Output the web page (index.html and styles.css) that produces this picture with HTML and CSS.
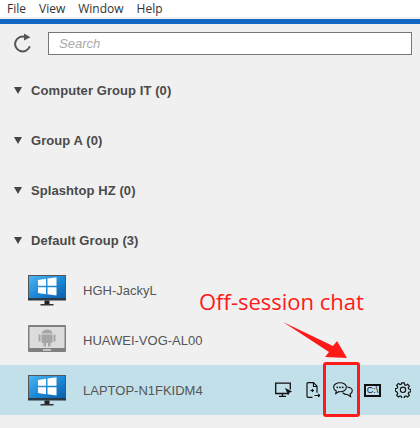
FILE: index.html
```html
<!DOCTYPE html>
<html lang="en">
<head>
    <meta charset="UTF-8">
    <meta name="viewport" content="width=device-width, initial-scale=1.0">
    <title>Computers</title>
    <link rel="stylesheet" href="styles.css">
</head>
<body>
    <svg class="defs" width="0" height="0">
        <defs>
            <linearGradient id="screen" x1="0" y1="0" x2="1" y2="1">
                <stop offset="0" stop-color="#4db4ee"/>
                <stop offset="0.55" stop-color="#1b86d6"/>
                <stop offset="1" stop-color="#0b5fa8"/>
            </linearGradient>
            <symbol id="win-monitor" viewBox="0 0 40 32">
                <rect x="1" y="1" width="38" height="25" fill="#555"/>
                <rect x="2" y="2" width="36" height="22" fill="url(#screen)"/>
                <rect x="1" y="24" width="38" height="2.5" fill="#2b3a44"/>
                <rect x="17.5" y="26.5" width="5" height="4" fill="#222"/>
                <rect x="13.5" y="30" width="13" height="1.5" fill="#333"/>
                <path d="M11 6l8-1.200v7h-8zM20.500 4.600l9-1.300v8.500h-9zM11 13.200h8v7l-8-1.200zM20.500 13.200h9v8.300l-9-1.300z" fill="#fff"/>
            </symbol>
        </defs>
    </svg>

    <div class="menu">
        <span>File</span>
        <span>View</span>
        <span>Window</span>
        <span>Help</span>
    </div>
    <div class="blue-bar"></div>

    <div class="toolbar">
        <svg class="refresh" width="20" height="20" viewBox="0 0 20 20">
            <path d="M15.800 13.200A7.500 7.500 0 1 1 11.500 4" fill="none" stroke="#555" stroke-width="2"/>
            <path d="M10 0.500l6.500 3.700-6.500 3.300z" fill="#555"/>
        </svg>
        <input class="search" type="text" placeholder="Search">
    </div>

    <div class="group"><span class="arrow"></span>Computer Group IT (0)</div>
    <div class="group"><span class="arrow"></span>Group A (0)</div>
    <div class="group"><span class="arrow"></span>Splashtop HZ (0)</div>
    <div class="group"><span class="arrow"></span>Default Group (3)</div>

    <div class="device">
        <svg class="device-icon" width="40" height="32"><use href="#win-monitor"/></svg>
        <span>HGH-JackyL</span>
    </div>
    <div class="device">
        <svg class="device-icon" width="40" height="32" viewBox="0 0 40 32">
            <rect x="1" y="1" width="38" height="27" rx="1" fill="#808080"/>
            <rect x="2.500" y="3" width="35" height="21" fill="#dcdcdc"/>
            <rect x="16" y="25" width="8" height="2" fill="#c4c4c4"/>
            <path d="M14.500 9.500a5.500 4 0 0 1 11 0zM14.500 10.500h11v7.500a1 1 0 0 1-1 1h-1v3.500h-2.500v-3.500h-2v3.500h-2.500v-3.500h-1a1 1 0 0 1-1-1zM11.500 10.500h2v7h-2zM26.500 10.500h2v7h-2z" fill="#a6a6a6"/>
        </svg>
        <span>HUAWEI-VOG-AL00</span>
    </div>
    <div class="device selected">
        <svg class="device-icon" width="40" height="32"><use href="#win-monitor"/></svg>
        <span>LAPTOP-N1FKIDM4</span>
        <div class="actions">
            <svg width="17" height="16" viewBox="0 0 17 16" fill="none" stroke="#111" stroke-width="1.300">
                <path d="M13 11.500H.7V1.200h14.600v6.300"/>
                <path d="M7.500 11.500v2.500M4 14.300h7"/>
                <path d="M10.500 6.500l6 3-2.300.9-.9 2.300z" fill="#111" stroke-width="0.600"/>
            </svg>
            <svg class="act-file" width="14" height="16" viewBox="0 0 14 16" fill="none" stroke="#111" stroke-width="1.200">
                <path d="M6.500 15.300H2a1 1 0 0 1-1-1V1.700a1 1 0 0 1 1-1h5.500L11 4.200v6.500"/>
                <path d="M7.500 1v3.500H11"/>
                <path d="M4.500 8.500h2.500M6 7.200l1.300 1.300L6 9.800M8.500 13.500h5M12.200 12l1.500 1.500-1.500 1.500"/>
            </svg>
            <svg width="20" height="16" viewBox="0 0 20 16" fill="none" stroke="#111" stroke-width="1.100">
                <path d="M7 .8C3.400.8.600 2.700.6 5.200c0 1.600 1.100 3 2.700 3.800l-.6 2.600 3-1.900c.4.100.8.100 1.300.1 3.600 0 6.400-2 6.400-4.600S10.600.8 7 .8z"/>
                <path d="M14.300 5c2.800.3 5 1.800 5 3.800 0 1.300-.9 2.400-2.200 3.100l.5 2.600-2.900-1.800c-2.200 0-4.100-.7-5.100-2"/>
                <circle cx="4.300" cy="5.300" r="0.900" fill="#111" stroke="none"/>
                <circle cx="7" cy="5.300" r="0.900" fill="#111" stroke="none"/>
                <circle cx="9.700" cy="5.300" r="0.900" fill="#111" stroke="none"/>
            </svg>
            <span class="cmd">C:\</span>
            <svg class="act-gear" width="16" height="16" viewBox="0 0 18 18" fill="none" stroke="#111" stroke-width="1.300">
                <path d="M7.600 1h2.800l.4 2.200 1.500.6 1.900-1.300 2 2-1.300 1.900.6 1.500 2.200.4v2.800l-2.200.4-.6 1.500 1.300 1.900-2 2-1.900-1.300-1.500.6-.4 2.200H7.600l-.4-2.200-1.500-.6-1.900 1.300-2-2 1.300-1.900-.6-1.500L.3 10.200V7.400l2.200-.4.600-1.500-1.300-1.900 2-2 1.900 1.300 1.500-.6z"/>
                <circle cx="9" cy="8.800" r="3"/>
            </svg>
        </div>
    </div>

    <!-- red notes drawn over the screenshot -->
    <div class="note">Off-session chat</div>
    <svg class="note-arrow" width="70" height="42" viewBox="0 0 70 42">
        <path d="M1 1L51 25 55 20 65 37 43 36 47 31z" fill="#ff1a1a"/>
    </svg>
    <div class="note-box"></div>
</body>
</html>
```

FILE: styles.css
```css
body {
    margin: 0;
    height: 428px;
    overflow: hidden;
    background-color: #f0f0f0;
    color: #4a4a4a;
    font-family: 'Liberation Sans', Arial, sans-serif;
    position: relative;
}
.defs {
    display: block;
    height: 0;
}
.menu {
    height: 17px;
    margin-bottom: 2px;
    padding-left: 7px;
    display: flex;
    gap: 13px;
    align-items: center;
    background-color: #fff;
    color: #333;
    font-family: 'Open Sans', sans-serif;
    font-size: 12px;
}
.blue-bar {
    height: 5px;
    background-color: #1168c3;
}
.toolbar {
    height: 41px;
    padding: 8px 8px 0 14px;
    box-sizing: border-box;
    display: flex;
    align-items: flex-start;
    gap: 14px;
}
.refresh {
    flex-shrink: 0;
    margin-top: 1px;
}
.search {
    flex: 1;
    min-width: 0;
    height: 23px;
    box-sizing: border-box;
    padding: 0 10px;
    border: 1px solid #777;
    background-color: #fff;
    font-family: 'Liberation Sans', Arial, sans-serif;
    font-size: 13px;
    font-style: italic;
}
.search::placeholder {
    color: #aaa;
    opacity: 1;
}
.group {
    height: 50px;
    padding-left: 14px;
    display: flex;
    align-items: center;
    font-size: 13px;
    letter-spacing: 0.08px;
    font-weight: 700;
    color: #4a4a4a;
}
.arrow {
    width: 0;
    height: 0;
    margin-right: 9px;
    border-left: 4px solid transparent;
    border-right: 4px solid transparent;
    border-top: 7px solid #444;
}
.device {
    height: 50px;
    padding-left: 27px;
    display: flex;
    align-items: center;
    font-size: 13px;
    color: #555;
}
.device.selected {
    background-color: #c2e0ea;
}
.device-icon {
    flex-shrink: 0;
    margin-right: 16px;
}
.actions {
    margin-left: auto;
    padding-right: 9px;
    display: flex;
    align-items: center;
    gap: 13px;
}
.act-file {
    margin-left: 1px;
}
.act-gear {
    margin-left: 1px;
}
.cmd {
    width: 13px;
    height: 9px;
    margin-left: -2px;
    border: 2px solid #111;
    font-size: 9px;
    line-height: 9px;
    text-align: center;
    white-space: nowrap;
    color: #111;
}
.note {
    position: absolute;
    left: 199px;
    top: 286px;
    color: #ff1a1a;
    font-family: 'Open Sans', sans-serif;
    font-size: 22px;
    line-height: 30px;
    white-space: nowrap;
}
.note-arrow {
    position: absolute;
    left: 282px;
    top: 321px;
}
.note-box {
    position: absolute;
    left: 323px;
    top: 362px;
    width: 37px;
    height: 55px;
    box-sizing: border-box;
    border: 3px solid #ff1a1a;
    border-radius: 3px;
}
```
